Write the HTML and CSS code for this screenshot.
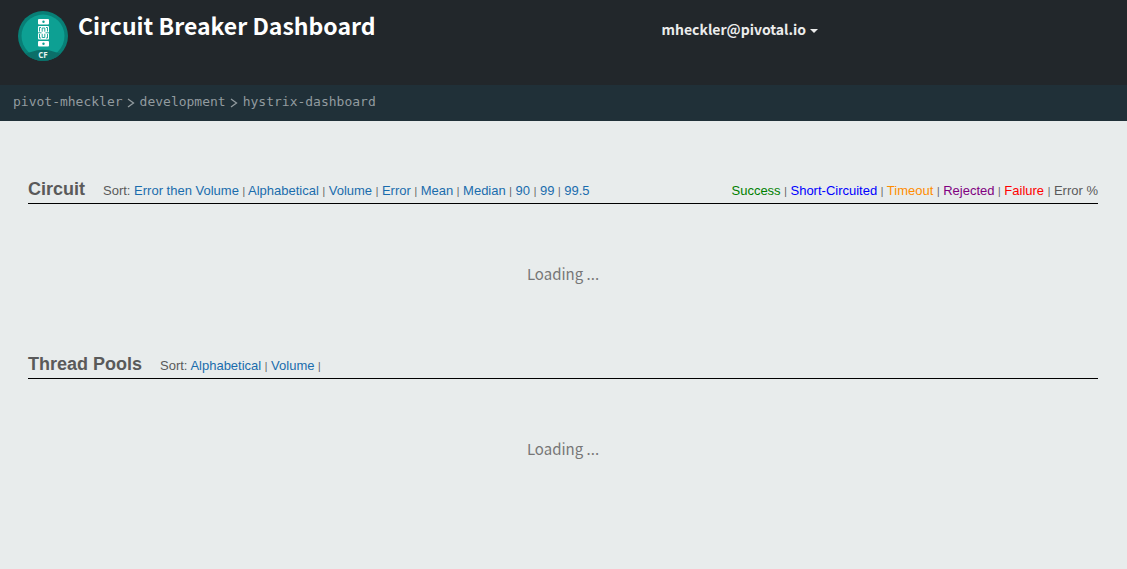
FILE: index.html
```html
<!DOCTYPE html>
<html lang="en">
<head>
<meta charset="utf-8">
<title>Circuit Breaker Dashboard</title>
<link rel="stylesheet" href="styles.css">
</head>
<body>
<header class="header">
  <div class="brand">
    <svg class="logo" viewBox="0 0 50 50" aria-hidden="true">
      <defs><clipPath id="disc"><circle cx="25" cy="25" r="25"/></clipPath></defs>
      <circle cx="25" cy="25" r="25" fill="#087f76"/>
      <circle cx="25" cy="25" r="21.500" fill="#0da093"/>
      <path clip-path="url(#disc)" d="M0 50V44Q8 43 13 41Q25 36.500 37 41Q42 43 50 44V50Z" fill="#0b6f69"/>
      <rect x="20" y="8" width="11" height="5.500" rx="1" fill="#fff"/>
      <rect x="20" y="15" width="11" height="13.500" rx="1" fill="#fff"/>
      <rect x="20" y="30" width="11" height="5.500" rx="1" fill="#fff"/>
      <circle cx="25.500" cy="10.700" r="1.200" fill="#0da093"/>
      <circle cx="25.500" cy="32.700" r="1.200" fill="#0da093"/>
      <path d="M21.500 20.500V16.500H23M29.500 20.500V16.500H28M24.200 20.700V17H26.800V20.700M21.500 23V27H23M29.500 23V27H28M24.200 22.800V26.500H26.800V22.800M20 21.800H23.500M27.500 21.800H31" fill="none" stroke="#0da093" stroke-width="0.900"/>
      <text class="logo-text" x="25" y="47" text-anchor="middle">CF</text>
    </svg>
    <h1 class="title">Circuit Breaker Dashboard</h1>
  </div>
  <div class="account"><button class="user" type="button">mheckler@pivotal.io<span class="caret"></span></button></div>
</header>
<nav class="breadcrumb" aria-label="Breadcrumb">
  <a href="#">pivot-mheckler</a><svg class="chevron" viewBox="0 0 8 10" aria-hidden="true"><path d="M1 1L6.500 5L1 9"/></svg><a href="#">development</a><svg class="chevron" viewBox="0 0 8 10" aria-hidden="true"><path d="M1 1L6.500 5L1 9"/></svg><a href="#">hystrix-dashboard</a>
</nav>
<main class="main">
  <section class="panel">
    <div class="panel-head">
      <h2>Circuit</h2>
      <div class="sort">Sort: <a href="#">Error then Volume</a> <i>|</i> <a href="#">Alphabetical</a> <i>|</i> <a href="#">Volume</a> <i>|</i> <a href="#">Error</a> <i>|</i> <a href="#">Mean</a> <i>|</i> <a href="#">Median</a> <i>|</i> <a href="#">90</a> <i>|</i> <a href="#">99</a> <i>|</i> <a href="#">99.5</a></div>
      <div class="legend"><span class="success">Success</span> <i>|</i> <span class="short">Short-Circuited</span> <i>|</i> <span class="timeout">Timeout</span> <i>|</i> <span class="rejected">Rejected</span> <i>|</i> <span class="failure">Failure</span> <i>|</i> <span>Error %</span></div>
    </div>
    <p class="loading">Loading ...</p>
  </section>
  <section class="panel">
    <div class="panel-head">
      <h2>Thread Pools</h2>
      <div class="sort">Sort: <a href="#">Alphabetical</a> <i>|</i> <a href="#">Volume</a> <i>|</i></div>
    </div>
    <p class="loading">Loading ...</p>
  </section>
</main>
</body>
</html>
```
FILE: styles.css
```css
* { box-sizing: border-box; }
body {
  margin: 0;
  background: #e8ecec;
  color: #5a5a5a;
  font-family: "Noto Sans CJK SC", "Open Sans", sans-serif;
}
a { text-decoration: none; }
.header {
  display: grid;
  grid-template-columns: 1fr 1fr;
  align-items: start;
  height: 85px;
  padding: 11px 18px 0;
  background: #22272b;
}
.brand { display: flex; gap: 10px; }
.logo { width: 50px; height: 50px; flex: none; }
.logo-text { fill: #e4f2f0; font: bold 8px "Open Sans", sans-serif; }
.title {
  margin: 0;
  color: #fff;
  font-size: 23px;
  font-weight: 700;
  line-height: 28px;
  white-space: nowrap;
}
.account { padding: 8px 0 0 98px; }
.user {
  display: flex;
  align-items: center;
  gap: 4px;
  padding: 0;
  border: 0;
  background: none;
  color: #ececec;
  font: bold 14px/20px "Noto Sans CJK SC", sans-serif;
}
.caret {
  margin-top: 3px;
  border: 4px solid transparent;
  border-top-color: #ececec;
  border-bottom: 0;
}
.breadcrumb {
  display: flex;
  align-items: center;
  height: 36px;
  padding: 0 13px 2px;
  background: #203038;
  font: 13px/20px "DejaVu Sans Mono", monospace;
}
.breadcrumb a { color: #929b9f; }
.chevron {
  width: 8px;
  height: 10px;
  margin: 2px 5px 0 4px;
  fill: none;
  stroke: #929b9f;
  stroke-width: 1.3;
}
.main { padding: 58px 29px 0 28px; }
.panel { padding-bottom: 67px; }
.panel-head {
  display: flex;
  align-items: baseline;
  border-bottom: 1px solid #000;
  padding-bottom: 1px;
  font: 13px/20px "Liberation Sans", Arial, sans-serif;
}
.panel-head h2 { margin: 0 18px 0 0; font-size: 18px; line-height: 20px; }
.panel-head i { font-size: 10px; font-style: normal; }
.sort a { color: #1a6cad; }
.legend { margin-left: auto; }
.success { color: #008000; }
.short { color: #0000ff; }
.timeout { color: #ff8c00; }
.rejected { color: #800080; }
.failure { color: #ff0000; }
.loading {
  margin: 57px 0 0;
  color: #777;
  text-align: center;
  font-size: 15px;
  line-height: 26px;
}
```
